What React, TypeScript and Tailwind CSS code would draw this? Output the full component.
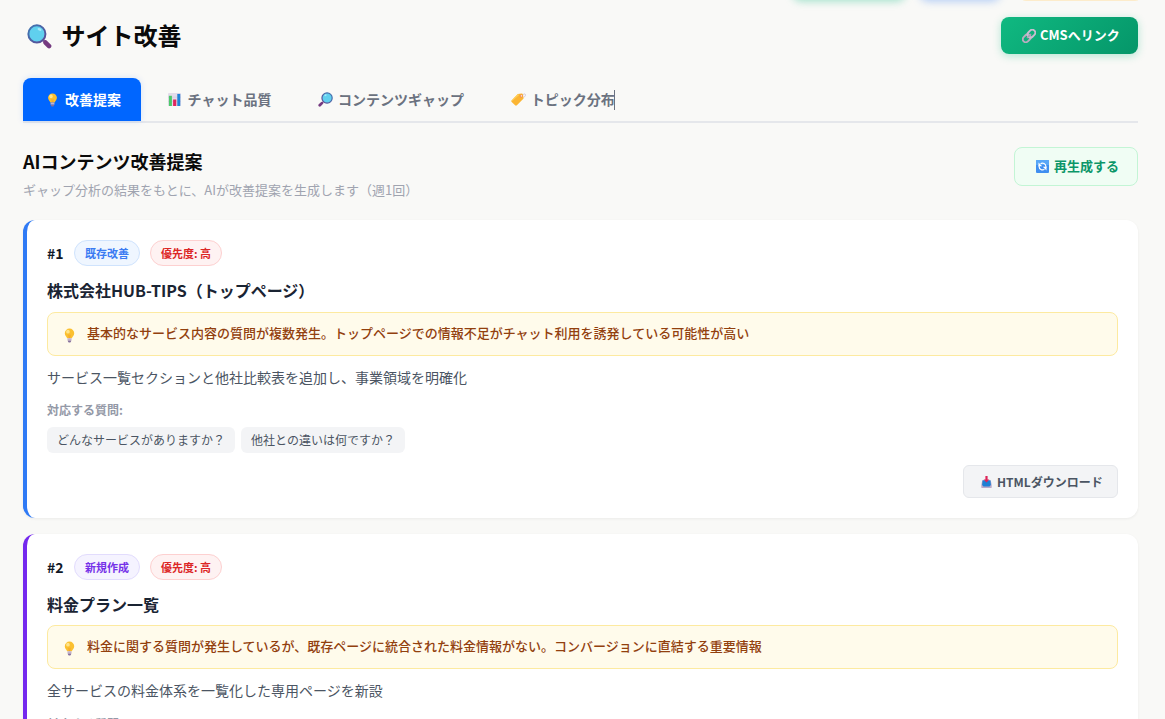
import type { ReactNode } from "react";

type IconProps = { className?: string };

function Magnifier({ className = "", flip = false, id }: IconProps & { flip?: boolean; id: string }) {
  return (
    <svg viewBox="0 0 24 24" className={className}>
      <defs>
        <linearGradient id={id} x1="0" y1="0" x2="1" y2="1">
          <stop offset="0" stopColor="#3f78b4" />
          <stop offset="1" stopColor="#5b4a94" />
        </linearGradient>
      </defs>
      <g transform={flip ? "translate(24 0) scale(-1 1)" : undefined}>
        <path d="M15.5 15.5l2.2 2.2" stroke="#8a6a9c" strokeWidth="2.4" />
        <path d="M17.8 17.8l3.4 3.4" stroke="#753a80" strokeWidth="4.4" strokeLinecap="round" />
        <circle cx="9.5" cy="9.5" r="8.2" fill="#60d0ee" stroke={`url(#${id})`} strokeWidth="1.9" />
        <ellipse cx="12" cy="5.2" rx="2" ry="1.2" fill="#a5e9fa" transform="rotate(25 12 5.2)" />
      </g>
    </svg>
  );
}

function Bulb({ className = "" }: IconProps) {
  return (
    <svg viewBox="0 0 14 19" className={className}>
      <path d="M7 .6A6 6 0 0 0 1 6.6c0 2.8 2.2 4 3 6.4h6c.8-2.4 3-3.6 3-6.4A6 6 0 0 0 7 .6z" fill="#fbc02f" />
      <ellipse cx="5" cy="4.6" rx="2.3" ry="2.4" fill="#ffe48a" />
      <path d="M6 8.5l.6 4h.8l.6-4" stroke="#f39a2b" strokeWidth=".8" fill="none" />
      <path d="M4.4 13h5.2v2.8H4.4z" fill="#c3b3cc" />
      <path d="M4.8 15.8h4.4c0 1.6-.9 2.6-2.2 2.6s-2.2-1-2.2-2.6z" fill="#85709c" />
    </svg>
  );
}

function BarChart({ className = "" }: IconProps) {
  return (
    <svg viewBox="0 0 14 14" className={className}>
      <rect width="14" height="14" rx="1" fill="#e3dcea" />
      <path d="M0 4.5h14M0 9h14" stroke="#cfc5da" strokeWidth=".6" />
      <rect x="1" y="3" width="3.2" height="11" fill="#4cc96a" />
      <rect x="5.5" y="7" width="3.4" height="7" fill="#e0265e" />
      <rect x="10" y="1" width="3.2" height="13" fill="#2383d8" />
    </svg>
  );
}

function Tag({ className = "" }: IconProps) {
  return (
    <svg viewBox="0 0 15 13" className={className}>
      <path d="M11.4 3.4C11.6 1.6 13 .5 14 1c1 .7.6 2.5-1.6 3.4" fill="none" stroke="#cfc4d8" strokeWidth=".9" />
      <path d="M6.9 1.1L10.6.5c.6-.1 1 .1 1.2.5l.7 3.9c.1.5 0 .8-.4 1.2l-6.2 6.2c-.6.6-1.3.6-1.8 0L.7 9c-.5-.6-.5-1.2.1-1.7z" fill="#fbb533" />
      <path d="M6.9 1.1L.8 7.3c-.4.4-.4.8-.2 1.2l7.6-6.6z" fill="#ffcf58" />
      <circle cx="10.2" cy="3" r="1.6" fill="#f08a4b" />
      <circle cx="10.4" cy="2.9" r=".8" fill="#f3e2e8" />
    </svg>
  );
}

function ChainLink({ className = "" }: IconProps) {
  return (
    <svg viewBox="0 0 14 14" className={className} fill="none">
      <g transform="rotate(-45 7 7)" strokeWidth="1.9">
        <rect x="-.6" y="4" width="8.6" height="6" rx="3" stroke="#b9adc0" />
        <rect x="6" y="4" width="8.6" height="6" rx="3" stroke="#c9bdd0" />
        <path d="M4 7h6" stroke="#a99db2" strokeWidth="1.4" />
      </g>
    </svg>
  );
}

function Refresh({ className = "" }: IconProps) {
  return (
    <svg viewBox="0 0 13 13" className={className} fill="none">
      <rect width="13" height="13" rx="1" fill="#3f8ff0" />
      <path d="M0 1a1 1 0 0 1 1-1h11a1 1 0 0 1 1 1v4H0z" fill="#58a7f7" />
      <path d="M4.6 3.7a3.4 3.4 0 0 1 5.3 2.8v1.2M8.4 9.3a3.4 3.4 0 0 1-5.3-2.8V5.3" stroke="#fff" strokeWidth="1.2" />
      <path d="M2.5 2.6v3.7h3.7zM10.5 10.4V6.7H6.8z" fill="#fff" />
    </svg>
  );
}

function Inbox({ className = "" }: IconProps) {
  return (
    <svg viewBox="0 0 11 12" className={className}>
      <path d="M1.2 4.5h8.6l.9 4.6v2.4c0 .3-.2.5-.5.5H.8c-.3 0-.5-.2-.5-.5V9.1z" fill="#b9a9cb" />
      <path d="M1.6 4.2h7.8l.5 4.8-1.4 1.6h-6L1.1 9z" fill="#1f7fd4" />
      <path d="M4.4 0h2.2v3.4h1.8L5.5 6.6 2.6 3.4h1.8z" fill="#dd2459" />
    </svg>
  );
}

const tabs: { label: string; icon: ReactNode; active?: boolean; caret?: boolean }[] = [
  { label: "改善提案", icon: <Bulb className="h-[14px] w-[11px]" />, active: true },
  { label: "チャット品質", icon: <BarChart className="mr-px size-[13px]" /> },
  { label: "コンテンツギャップ", icon: <Magnifier id="lens-tab" flip className="size-[15px]" /> },
  { label: "トピック分布", icon: <Tag className="h-[13px] w-[15px]" />, caret: true },
];

type Proposal = {
  no: string;
  kind: string;
  kindClass: string;
  edgeClass: string;
  title: string;
  titleClass: string;
  labelClass: string;
  reason: string;
  description: string;
  questions: string[];
};

const proposals: Proposal[] = [
  {
    no: "#1",
    kind: "既存改善",
    kindClass: "border-[#cfe3fd] bg-[#eff6ff] text-[#3b7bf2]",
    edgeClass: "border-l-[#2f7af5]",
    title: "株式会社HUB-TIPS（トップページ）",
    titleClass: "mb-[10px]",
    labelClass: "mt-3",
    reason: "基本的なサービス内容の質問が複数発生。トップページでの情報不足がチャット利用を誘発している可能性が高い",
    description: "サービス一覧セクションと他社比較表を追加し、事業領域を明確化",
    questions: ["どんなサービスがありますか？", "他社との違いは何ですか？"],
  },
  {
    no: "#2",
    kind: "新規作成",
    kindClass: "border-[#e2dcfd] bg-[#f5f3ff] text-[#7532e8]",
    edgeClass: "border-l-[#7428ee]",
    title: "料金プラン一覧",
    titleClass: "mb-[9px]",
    labelClass: "mt-[13px]",
    reason: "料金に関する質問が発生しているが、既存ページに統合された料金情報がない。コンバージョンに直結する重要情報",
    description: "全サービスの料金体系を一覧化した専用ページを新設",
    questions: [],
  },
];

function ProposalCard({ p }: { p: Proposal }) {
  return (
    <article className={`rounded-xl border-l-4 bg-white p-5 shadow-[0_1px_3px_rgba(0,0,0,0.06)] ${p.edgeClass}`}>
      <div className="flex h-[26px] items-center gap-[10px]">
        <span className="w-[17px] whitespace-nowrap text-[14px] leading-[26px] font-bold text-[#111827]">{p.no}</span>
        <span className={`flex h-[26px] items-center rounded-full border px-[10px] text-[11px] font-bold ${p.kindClass}`}>
          {p.kind}
        </span>
        <span className="flex h-[26px] items-center rounded-full border border-[#fdd0d0] bg-[#fef2f2] px-[10px] text-[11px] font-bold text-[#dc2626]">
          優先度: 高
        </span>
      </div>
      <h3 className={`mt-3 text-[16px] leading-6 font-semibold text-[#1a2433] ${p.titleClass}`}>{p.title}</h3>
      <div className="flex h-[44px] items-center rounded-lg border border-[#fdeaa0] bg-[#fffbeb] pl-4 text-[13px] font-medium text-[#92400e]">
        <Bulb className="mt-[3px] mr-3 h-[15px] w-[11px]" />
        <span className="pb-[2px]">{p.reason}</span>
      </div>
      <p className="mt-[9px] text-[14px] leading-6 text-[#4b5563]">{p.description}</p>
      <p className={`text-[12px] leading-[18px] font-semibold text-[#9499a7] ${p.labelClass}`}>対応する質問:</p>
      <div className="mt-2 flex gap-[6px]">
        {p.questions.map((q) => (
          <span key={q} className="flex h-[26px] items-center rounded-md bg-[#f3f4f6] px-[10px] text-[12px] text-[#4b5563]">
            {q}
          </span>
        ))}
      </div>
      <div className="mt-3 flex justify-end">
        <button className="flex h-[33px] w-[155px] items-center rounded-md border border-[#e5e7eb] bg-[#f3f4f6] pl-[17px] text-[12px] font-semibold text-[#4b5563]">
          <Inbox className="mr-[5px] h-[12px] w-[11px]" />
          HTMLダウンロード
        </button>
      </div>
    </article>
  );
}

export default function App() {
  return (
    <div className="relative h-[719px] w-full overflow-hidden bg-[#f9f9f7] pr-[27px] pl-[23px] font-['Noto_Sans_CJK_JP','Noto_Sans',sans-serif] whitespace-nowrap">
      <div className="absolute -top-[37px] right-[22px] flex">
        <div className="mr-[15px] h-[36px] w-[112px] rounded-lg bg-[#10b981] shadow-[0_2px_8px_rgba(16,185,129,0.4)]" />
        <div className="mr-[18px] h-[36px] w-[80px] rounded-lg bg-[#3b82f6] shadow-[0_2px_8px_rgba(59,130,246,0.4)]" />
        <div className="h-[38px] w-[125px] rounded-lg border border-[#fdeccb] bg-[#fffbeb]" />
      </div>

      <header className="flex h-[54px] items-start justify-between pt-[17px]">
        <h1 className="flex h-[37px] items-center text-[24px] font-bold text-[#0a0a0a]">
          <Magnifier id="lens-title" className="mt-px mr-[10px] ml-1 size-[25px]" />
          <span className="-ml-[0.5px] pb-[2px]">サイト改善</span>
        </h1>
        <button className="flex h-[37px] w-[137px] items-center rounded-lg bg-linear-135 from-[#10b981] to-[#059669] pl-[21px] text-[13px] font-bold text-white shadow-[0_2px_8px_rgba(16,185,129,0.3)]">
          <ChainLink className="mr-1 size-[14px]" />
          <span className="pb-[2px]">CMSへリンク</span>
        </button>
      </header>

      <nav className="mt-6 flex h-[45px] gap-[4.6px] border-b-2 border-[#e5e7eb]">
        {tabs.map((t) => (
          <button
            key={t.label}
            className={
              t.active
                ? "flex h-[43px] items-center rounded-t-lg bg-[#0066ff] px-5 text-[14px] font-bold text-white shadow-[0_0_6px_rgba(0,102,255,0.15)]"
                : "flex h-[43px] items-center px-5 text-[14px] font-semibold text-[#6b7280]"
            }
          >
            <span className="mr-[3px] flex w-[19px] justify-center">{t.icon}</span>
            {t.label}
            {t.caret && <span className="-ml-px h-[20px] w-px bg-[#6b7280]" />}
          </button>
        ))}
      </nav>

      <section className="mt-6 flex items-start justify-between">
        <div>
          <h2 className="mt-px text-[18px] leading-[26px] font-semibold text-[#0a0a0a]">AIコンテンツ改善提案</h2>
          <p className="mt-[6px] text-[13px] leading-5 text-[#a0a4b0]">
            ギャップ分析の結果をもとに、AIが改善提案を生成します（週1回）
          </p>
        </div>
        <button className="flex h-[39px] w-[124px] items-center rounded-lg border border-[#c3f5d5] bg-[#f0fdf4] pl-[21px] text-[13px] font-bold text-[#0c9668]">
          <Refresh className="mr-[5px] size-[13px]" />
          <span className="pb-[2px]">再生成する</span>
        </button>
      </section>

      <main className="mt-[20px] flex flex-col gap-4">
        {proposals.map((p) => (
          <ProposalCard key={p.no} p={p} />
        ))}
      </main>
    </div>
  );
}
